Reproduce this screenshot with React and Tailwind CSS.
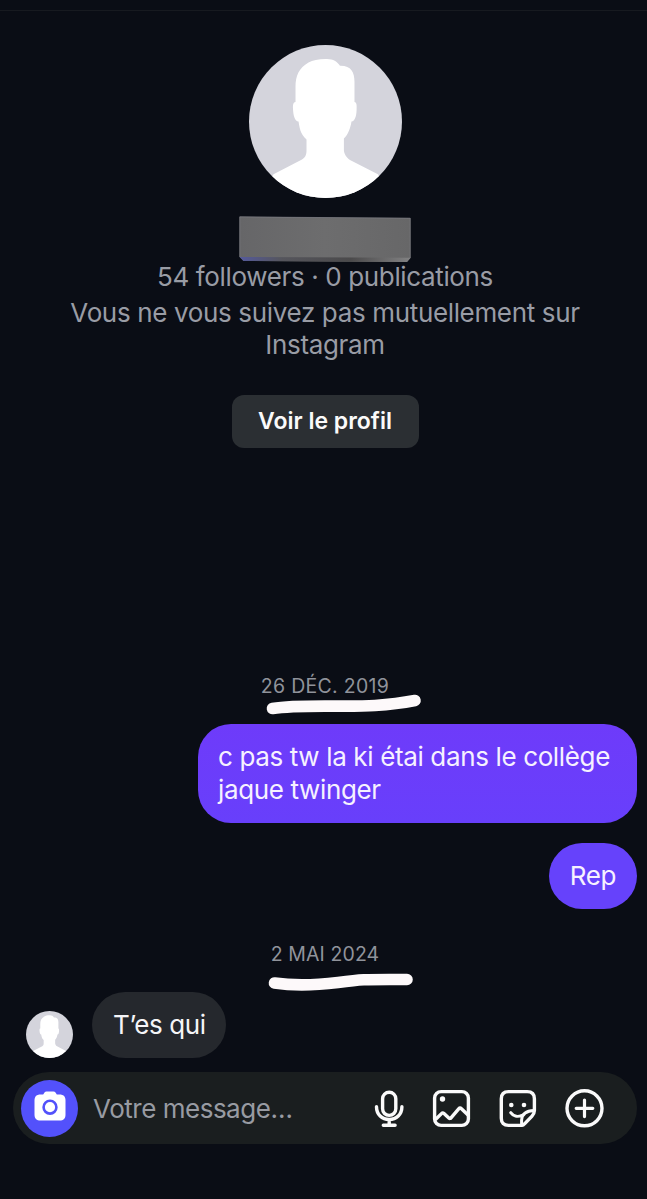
import React from 'react'

const Avatar = ({ className }) => (
  <svg viewBox="0 0 153 153" className={className}>
    <defs>
      <clipPath id="avatar-clip">
        <circle cx="76.5" cy="76.5" r="76.5" />
      </clipPath>
    </defs>
    <g clipPath="url(#avatar-clip)">
      <rect width="153" height="153" fill="#d4d4dc" />
      <path
        fill="#fff"
        d="M78 14C70 13.8 64 15.200 59.500 17.600C50 23 46.500 31 46.500 42V57C44.200 57 43.800 60 44 64C44.300 70 45.500 76 49.500 76.600C50.500 82 51 89 57.500 94.600V105C57.500 109 57 112 53 114.500L24.500 129.300L10 153H143L128.900 129.300L101 115C97 112.500 94.900 108 94.900 105V93.600C99 90 101.500 83 102.500 76.600C106 76 107.400 71 107.600 65C107.800 60 107.800 57.500 105.500 57V37C105.500 27 102 20.500 91 20.800C88 16.500 84.500 14.200 78 14Z"
      />
    </g>
  </svg>
)

const HiddenName = () => (
  <svg viewBox="0 0 172 47" className="mt-[18px] h-[47px] w-[172px] shrink-0">
    <defs>
      <linearGradient id="plate" x1="0" y1="0" x2="1" y2="0">
        <stop offset="0" stopColor="#666668" />
        <stop offset="0.5" stopColor="#6d6d6e" />
        <stop offset="1" stopColor="#676768" />
      </linearGradient>
      <linearGradient id="plate-edge" x1="0" y1="0" x2="1" y2="0">
        <stop offset="0" stopColor="#555a9c" />
        <stop offset="0.25" stopColor="#55555c" />
        <stop offset="0.65" stopColor="#4b4a4b" />
        <stop offset="1" stopColor="#828283" />
      </linearGradient>
    </defs>
    <path d="M0.500 0.500L171.500 2V42L168 46L4.500 45L0.500 40.500Z" fill="url(#plate)" />
    <path d="M0.500 41L171.500 41.800L168 46L4.500 45Z" fill="url(#plate-edge)" />
    <path d="M0.800 41V0.900L171.200 2.200V42" fill="none" stroke="#7c7c84" strokeWidth="0.700" />
  </svg>
)

const DateLabel = ({ children, stroke, className }) => (
  <div className={`relative flex h-6 items-center justify-center text-[19.5px] text-[#90939b] ${className}`}>
    <span>{children}</span>
    <svg viewBox="0 0 170 30" className="absolute top-[15px] left-[260px] h-[30px] w-[170px] overflow-visible">
      <path d={stroke} fill="none" stroke="#fdf9fa" strokeWidth="11.600" strokeLinecap="round" strokeLinejoin="round" />
    </svg>
  </div>
)

const CameraButton = () => (
  <button className="flex size-[57px] shrink-0 items-center justify-center rounded-full bg-[#5351fb]">
    <svg viewBox="0 0 32 30" className="mb-1 h-[30px] w-[32px]">
      <path
        fill="#fff"
        d="M10.500 1.600C11 0.900 11.600 0.500 12.500 0.500H19.500C20.400 0.500 21 0.900 21.500 1.600L22.800 3.600H25.500C29.500 3.600 31.500 5.600 31.500 9.600V23.500C31.500 27.500 29.500 29.500 25.500 29.500H6.500C2.500 29.500 0.500 27.500 0.500 23.500V9.600C0.500 5.600 2.500 3.600 6.500 3.600H9.200Z"
      />
      <circle cx="16" cy="16.200" r="6.400" fill="none" stroke="#5351fb" strokeWidth="2.600" />
    </svg>
  </button>
)

const Icon = ({ children, className = '' }) => (
  <svg
    viewBox="0 0 40 40"
    className={`size-10 overflow-visible ${className}`}
    fill="none"
    stroke="#fafafa"
    strokeWidth="3.400"
    strokeLinecap="round"
    strokeLinejoin="round"
  >
    {children}
  </svg>
)

const Composer = () => (
  <div className="mt-[14px] ml-[13px] flex h-[72px] w-[624px] items-center rounded-full bg-[#1a1e1f] pl-2">
    <CameraButton />
    <span className="ml-[15px] w-[276px] text-[26px] tracking-[-0.48px] text-[#989ba2]">Votre message…</span>
    <div className="flex items-center gap-[24px]">
      <Icon>
        <rect x="13.600" y="4.200" width="13.200" height="23.200" rx="6.600" />
        <path d="M7.500 18.800C7.500 26.500 13 31.500 20.200 31.500S32.900 26.500 32.900 18.800M20.200 31.500V37M14.300 37.300H26.100" />
      </Icon>
      <Icon className="-ml-px">
        <rect x="2.600" y="3.600" width="33.800" height="33.800" rx="6.500" />
        <circle cx="10.500" cy="11" r="2.700" fill="#fafafa" stroke="none" />
        <path d="M4 31L9.500 25.600Q10.700 24.400 12 25.600L16.800 29.900Q18 31 19 29.800L26.900 20.600Q28 19.300 29.200 20.500L36 27" />
      </Icon>
      <Icon className="ml-[2px]">
        <path d="M24 37.400H10.500C5.800 37.400 3.300 34.900 3.300 30.200V10.800C3.300 6.100 5.800 3.600 10.500 3.600H29.200C33.900 3.600 36.400 6.100 36.400 10.800V22.500C36.400 24.300 35.500 26.500 33.800 28.300L27 35.400C25.900 36.600 25 37.400 24 37.400Z" />
        <path d="M23.600 37V32C24 26 28 22.800 36 22.500M12.700 24.700C15 28 19.500 29.300 24 27.300" strokeWidth="3" />
        <circle cx="13.300" cy="17" r="2.300" fill="#fafafa" stroke="none" />
        <circle cx="26" cy="17" r="2.300" fill="#fafafa" stroke="none" />
      </Icon>
      <Icon className="ml-[2px]">
        <circle cx="20.500" cy="20.300" r="17.500" />
        <path d="M20.500 12V28.600M12.200 20.300H28.800" strokeWidth="3.200" />
      </Icon>
    </div>
  </div>
)

const App = () => {
  return (
    <div className="flex h-[1199px] w-[647px] flex-col overflow-hidden bg-[#0a0d15] font-['Inter',sans-serif]">
      <div className="h-[11px] shrink-0 border-b border-[#171a20]" />

      <div className="flex flex-col items-center pt-[34px] pl-[3px] text-[26px] text-[#999ca5]">
        <Avatar className="size-[153px] shrink-0" />
        <HiddenName />
        <p className="h-7 leading-7 tracking-[-0.36px]">54 followers · 0 publications</p>
        <p className="mt-[6px] text-center leading-[31.5px] tracking-[-0.35px]">
          Vous ne vous suivez pas mutuellement sur
          <br />
          Instagram
        </p>
        <button className="mt-[35px] h-[53px] w-[187px] rounded-xl bg-[#2b2f33] text-[23px] font-semibold text-[#fafafa]">
          Voir le profil
        </button>
      </div>

      <DateLabel className="mt-[227px] pl-[3px] tracking-[0.3px]" stroke="M12.500 18.500C40 14 85 17.500 115 15.500C130 14.500 142 13 155 10.500">
        26 DÉC. 2019
      </DateLabel>

      <div className="mt-[25px] flex flex-col items-end gap-5 pr-[10px] text-[26px] leading-[33px] tracking-[-0.36px] text-[#f6f1ff]">
        <div className="h-[99px] w-[439px] rounded-[33px] bg-linear-to-b from-[#6e3bfa] to-[#683ffb] px-5 py-4 whitespace-nowrap">
          c pas tw la ki étai dans le collège
          <br />
          jaque twinger
        </div>
        <div className="h-[66px] rounded-full bg-[#6642fb] px-[21px] py-4">Rep</div>
      </div>

      <DateLabel className="mt-[34px] pl-[3px] tracking-[0.1px]" stroke="M14.500 25C35 28 57 27 78 24.500C105 21 105 21.500 147 21.500">
        2 MAI 2024
      </DateLabel>

      <div className="mt-[25px] flex items-end pl-[26px]">
        <Avatar className="size-[47px]" />
        <div className="ml-[19px] h-[66px] w-[134px] rounded-full bg-[#25282d] px-[21px] py-4 text-[26px] leading-[33px] tracking-[-0.4px] whitespace-nowrap text-[#f5f5f7]">
          T’es qui
        </div>
      </div>

      <Composer />
    </div>
  )
}

export default App
